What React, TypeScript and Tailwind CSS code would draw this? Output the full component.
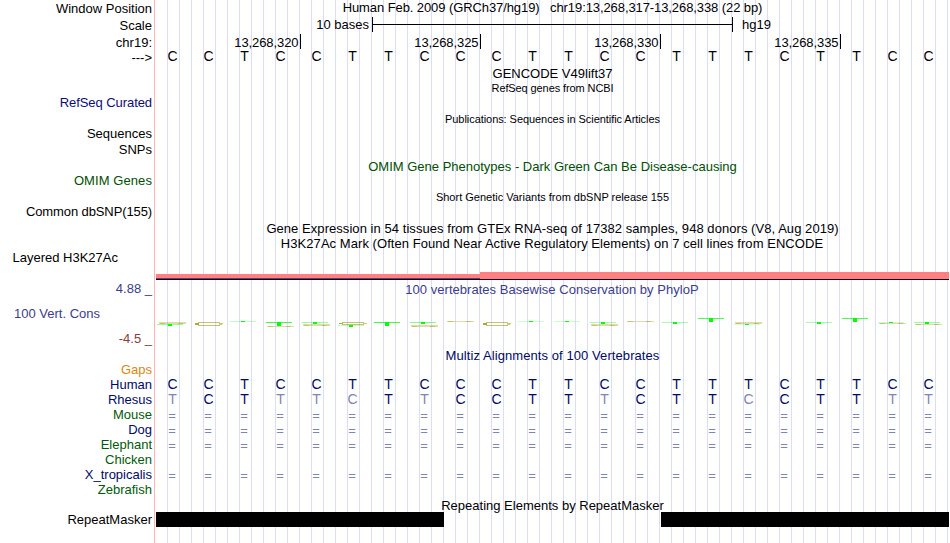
import React from "react";

const TITLE = "whitespace-pre text-center";

type RowProps = {
  h: string;
  label?: string;
  labelClass?: string;
  children?: React.ReactNode;
};

function Row({ h, label, labelClass = "pr-[2px]", children }: RowProps) {
  return (
    <div className={`flex ${h}`}>
      <div className={`w-[154px] shrink-0 whitespace-pre text-right ${labelClass}`}>{label}</div>
      <div className="ml-px w-[795px] shrink-0">{children}</div>
    </div>
  );
}

function Bases({ seq, className = "" }: { seq: string; className?: string }) {
  return (
    <div className={`flex ${className}`}>
      {seq.split("").map((c, i) => {
        if (c === "=") {
          return (
            <span key={i} className="w-9 shrink-0 pr-[2px] pt-px text-center text-[#8084b1]">
              =
            </span>
          );
        }
        return (
          <span
            key={i}
            className={`w-9 shrink-0 pr-px text-center text-[14px] leading-[15px] ${c === c.toLowerCase() ? "text-[#8084b1]" : ""}`}
          >
            {c.toUpperCase()}
          </span>
        );
      })}
    </div>
  );
}

const SEQUENCE = "CCTCCTTCCCTTCCTTTCTTCC";
const RHESUS = "tCTttcTtCCTTtCTTcCTTtt";
const ALIGNED = "======================";

const NAVY = "text-[#000a64]";
const GREEN = "text-[#005a0a]";

const SPECIES = [
  { name: "Gaps", color: "text-[#e0860d]", seq: "" },
  { name: "Human", color: NAVY, seq: SEQUENCE },
  { name: "Rhesus", color: NAVY, seq: RHESUS },
  { name: "Mouse", color: GREEN, seq: ALIGNED },
  { name: "Dog", color: NAVY, seq: ALIGNED },
  { name: "Elephant", color: GREEN, seq: ALIGNED },
  { name: "Chicken", color: GREEN, seq: "" },
  { name: "X_tropicalis", color: NAVY, seq: ALIGNED },
  { name: "Zebrafish", color: GREEN, seq: "" },
];

// [base index, top, height, bar opacity] for the flattened T glyphs
const LOGO_T: [number, number, number, number][] = [
  [0, 324, 2, 0.4],
  [2, 321, 1, 0.25],
  [3, 322, 4, 0.75],
  [4, 322, 2, 0.4],
  [5, 325, 2, 0.25],
  [6, 322, 4, 0.75],
  [7, 322, 2, 0.5],
  [10, 321, 1, 0.2],
  [11, 321, 1, 0.2],
  [12, 322, 2, 0.35],
  [14, 322, 2, 0.35],
  [15, 318, 4, 0.7],
  [16, 324, 1, 0.15],
  [18, 322, 2, 0.35],
  [19, 318, 4, 0.7],
  [20, 322, 1, 0.2],
  [21, 322, 2, 0.4],
];

// [base index, top, height] for the flattened C glyphs
const LOGO_C: [number, number, number][] = [
  [0, 322, 2],
  [1, 322, 4],
  [3, 326, 1],
  [4, 324, 2],
  [5, 322, 3],
  [7, 325, 2],
  [8, 321, 1],
  [9, 322, 4],
  [12, 324, 2],
  [13, 321, 1],
  [16, 322, 2],
  [20, 323, 1],
  [21, 324, 1],
];

function ConservationLogo() {
  return (
    <svg className="block" width="795" height="20" viewBox="155 312 795 20" shapeRendering="crispEdges">
      {LOGO_C.map(([i, y, h]) => {
        const x = 159 + i * 36;
        if (h >= 3) {
          return (
            <g key={i} fill="#a09a10">
              <rect x={x + 3} y={y} width="22" height="1" opacity="0.6" />
              <rect x={x + 3} y={y + h - 1} width="22" height="1" opacity="0.6" />
              <rect x={x} y={y + 1} width="4" height={h - 2} opacity="0.85" />
              <rect x={x + 24} y={y + 1} width="4" height="1" opacity="0.55" />
              {h === 4 && <rect x={x + 24} y={y + 2} width="3" height="1" opacity="0.55" />}
            </g>
          );
        }
        return (
          <g key={i} fill="#a09a10">
            <rect x={x} y={y} width="27" height={h} opacity="0.35" />
            <rect x={x + 1} y={y + h - 1} width="5" height="1" opacity="0.4" />
            <rect x={x + 19} y={y + h - 1} width="5" height="1" opacity="0.4" />
          </g>
        );
      })}
      {LOGO_T.map(([i, y, h, o]) => {
        const x = 158 + i * 36 - (i === 0 ? 1 : 0);
        return (
          <g key={i} fill="#00ff00">
            <rect x={x} y={y} width="26" height="1" opacity={o} />
            <rect x={x + 11} y={y} width="4" height={h} />
          </g>
        );
      })}
    </svg>
  );
}

export default function App() {
  return (
    <div className="relative h-[543px] w-[950px] overflow-hidden bg-white font-['Liberation_Sans',Arial,sans-serif] text-[13px] leading-[15px] text-black">
      <div className="absolute inset-y-0 left-[154px] w-px bg-[#ffb4b4]" />
      <div className="absolute inset-y-0 left-[167px] right-0 bg-[linear-gradient(to_right,#dcdcff_1px,transparent_1px)] bg-[length:12px_100%]" />

      <div className="relative flex flex-col pt-px">
        <Row h="h-[17px]" label="Window Position">
          <div className={`${TITLE} -mt-px tracking-[-0.09px]`}>
            {"Human Feb. 2009 (GRCh37/hg19)   chr19:13,268,317-13,268,338 (22 bp)"}
          </div>
        </Row>
        <Row h="h-[17px]" label="Scale">
          <div className="-mt-px flex h-[15px]">
            <span className="w-[214px] text-right">10 bases</span>
            <span className="ml-[3px] flex h-[15px] w-[361px] items-center border-x border-black">
              <span className="h-px w-full bg-black" />
            </span>
            <span className="ml-[9px]">hg19</span>
          </div>
        </Row>
        <Row h="h-[15px]" label="chr19:">
          <div className="-mt-px flex tracking-[-0.08px]">
            {["13,268,320", "13,268,325", "13,268,330", "13,268,335"].map((n, i) => (
              <span
                key={n}
                className={`h-[15px] border-r border-black pr-[1.5px] pt-px text-right ${i === 0 ? "w-[146px]" : "w-[180px]"}`}
              >
                {n}
              </span>
            ))}
          </div>
        </Row>
        <Row h="h-[16px]" label="--->">
          <Bases seq={SEQUENCE} className="-mt-px" />
        </Row>
        <Row h="h-[15px]">
          <div className={TITLE}>GENCODE V49lift37</div>
        </Row>
        <Row h="h-[14px]">
          <div className={`${TITLE} text-[11px] tracking-[-0.1px]`}>RefSeq genes from NCBI</div>
        </Row>
        <Row h="h-[17px]" label="RefSeq Curated" labelClass="pr-[2px] tracking-[-0.07px] text-[#0c0c78]" />
        <Row h="h-[14px]">
          <div className={`${TITLE} text-[11px] tracking-[-0.06px]`}>Publications: Sequences in Scientific Articles</div>
        </Row>
        <Row h="h-[16px]" label="Sequences" />
        <Row h="h-[17px]" label="SNPs" />
        <Row h="h-[14px]">
          <div className={`${TITLE} text-[#005000]`}>OMIM Gene Phenotypes - Dark Green Can Be Disease-causing</div>
        </Row>
        <Row h="h-[17px]" label="OMIM Genes" labelClass="pr-[2px] tracking-[0.08px] text-[#005000]" />
        <Row h="h-[14px]">
          <div className={`${TITLE} text-[11px]`}>Short Genetic Variants from dbSNP release 155</div>
        </Row>
        <Row h="h-[17px]" label="Common dbSNP(155)" labelClass="pr-[2px] tracking-[-0.11px]" />
        <Row h="h-[15px]">
          <div className={`${TITLE} tracking-[0.055px]`}>
            Gene Expression in 54 tissues from GTEx RNA-seq of 17382 samples, 948 donors (V8, Aug 2019)
          </div>
        </Row>
        <Row h="h-[14px]">
          <div className={`${TITLE} -ml-px tracking-[0.055px]`}>
            H3K27Ac Mark (Often Found Near Active Regulatory Elements) on 7 cell lines from ENCODE
          </div>
        </Row>
        <Row h="h-[22px]" label="Layered H3K27Ac" labelClass="pr-[36px]" />
        <Row h="h-[10px]">
          <div className="flex items-end pl-px">
            <div className="h-[6px] w-[324px] border-b border-[#100020] bg-[#ff8080]">
              <div className="mt-[4px] h-px bg-[#604070]" />
            </div>
            <div className="h-[8px] w-[469px] border-b border-[#100020] bg-[#ff8080]" />
          </div>
        </Row>

        <div className="flex h-[66px] text-[#3c3c8c]">
          <div className="w-[154px] shrink-0 pr-[2px] text-right">
            <div className="-mt-px h-[25px]">4.88 _</div>
            <div className="h-[25px] pr-[52px]">100 Vert. Cons</div>
            <div className="text-[#8c3c3c]">-4.5 _</div>
          </div>
          <div className="ml-px w-[795px] shrink-0">
            <div className={`${TITLE} h-[30px] pr-px tracking-[0.03px]`}>100 vertebrates Basewise Conservation by PhyloP</div>
            <ConservationLogo />
          </div>
        </div>

        <Row h="h-[14px]">
          <div className={`${TITLE} tracking-[0.08px] ${NAVY}`}>Multiz Alignments of 100 Vertebrates</div>
        </Row>
        {SPECIES.map((s) => (
          <Row key={s.name} h="h-[15px]" label={s.name} labelClass={`pr-[2px] ${s.color}`}>
            <Bases seq={s.seq} className={NAVY} />
          </Row>
        ))}
        <div className="h-px" />
        <Row h="h-[14px]">
          <div className={TITLE}>Repeating Elements by RepeatMasker</div>
        </Row>
        <Row h="h-[15px]" label="RepeatMasker">
          <div className="flex justify-between pl-px pr-px">
            <div className="h-[15px] w-[288px] bg-black" />
            <div className="h-[15px] w-[288px] bg-black" />
          </div>
        </Row>
      </div>
    </div>
  );
}
